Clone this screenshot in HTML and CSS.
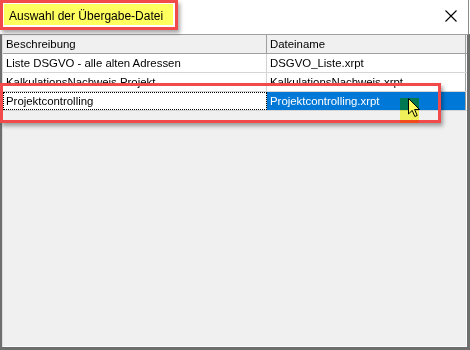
FILE: index.html
```html
<!DOCTYPE html>
<html lang="de">
<head>
    <meta charset="UTF-8">
    <title>Auswahl der Übergabe-Datei</title>
    <link rel="stylesheet" href="styles.css">
</head>
<body>
    <div class="window">
        <div class="titlebar">
            <span class="title">Auswahl der Übergabe-Datei</span>
            <svg class="close" width="12" height="12" viewBox="0 0 12 12"><path d="M0.5 0.5L11.5 11.5M11.5 0.5L0.5 11.5" stroke="#000" stroke-width="1.1"/></svg>
        </div>
        <div class="grid">
            <div class="row head">
                <div class="cell">Beschreibung</div>
                <div class="cell">Dateiname</div>
            </div>
            <div class="row">
                <div class="cell">Liste DSGVO - alle alten Adressen</div>
                <div class="cell">DSGVO_Liste.xrpt</div>
            </div>
            <div class="row">
                <div class="cell">KalkulationsNachweis Projekt</div>
                <div class="cell">KalkulationsNachweis.xrpt</div>
            </div>
            <div class="row current">
                <div class="cell focus">Projektcontrolling</div>
                <div class="cell selected">Projektcontrolling.xrpt</div>
            </div>
        </div>
    </div>

    <!-- annotations drawn over the screenshot -->
    <div class="mark mark-title"></div>
    <div class="mark mark-row"></div>
    <svg class="cursor" width="13" height="20" viewBox="0 0 13 20"><path d="M0.5 0.5L0.5 16L4.2 12.4L6.8 18.5L9.2 17.5L6.6 11.5L11.5 11.5Z" fill="#fff" stroke="#000" stroke-width="1"/></svg>
    <div class="hl hl-title"></div>
    <div class="hl hl-cursor"></div>
</body>
</html>
```
FILE: styles.css
```css
body{
    margin: 0;
    background-color: #fff;
    font-family: 'Liberation Sans', Arial, sans-serif;
    color: #000;
}

.window{
    width: 470px;
    height: 350px;
    display: flex;
    flex-direction: column;
    box-sizing: border-box;
}

.titlebar{
    height: 32px;
    display: flex;
    align-items: center;
    justify-content: space-between;
    padding: 0 11px 2px 9px;
    background-color: #fff;
    border-right: 1px solid #8a8a8a;
    margin-right: 1px;
}

.title{
    font-size: 12px;
}

.grid{
    flex-grow: 1;
    background-color: #f0f0f0;
    border: 3px solid #6e6e6e;
    border-top: 1px solid #a0a0a0;
    border-left-width: 2px;
    box-shadow: inset 1px 0 #dcdcdc, inset -1px -1px #fcfcfc;
    padding-left: 1px;
}

.row{
    display: grid;
    grid-template-columns: 264px 199px;
    height: 18px;
    background-color: #fff;
    border-bottom: 1px solid #d5d5d5;
    font-size: 11.4px;
}

.row.head{
    background-color: #f0f0f0;
    border-bottom: 1px solid #a0a0a0;
}

.cell{
    display: flex;
    align-items: center;
    padding-left: 3px;
    border-right: 1px solid #a0a0a0;
    white-space: nowrap;
    overflow: hidden;
}

.row .cell:first-child{
    border-right-color: #d5d5d5;
}

.row.head .cell:first-child{
    border-right-color: #a0a0a0;
}

.focus{
    outline: 1px dotted #000;
    outline-offset: -1px;
}

.selected{
    background-color: #0078d7;
    color: #fff;
}

.mark{
    position: absolute;
    border: 3px solid #f24a4a;
    box-shadow: 2px 3px 4px rgba(0, 0, 0, 0.35);
    box-sizing: border-box;
}

.mark-title{
    left: 0;
    top: 0;
    width: 178px;
    height: 30px;
}

.mark-row{
    left: 0;
    top: 83px;
    width: 441px;
    height: 40px;
}

.cursor{
    position: absolute;
    left: 408px;
    top: 98px;
}

.hl{
    position: absolute;
    background-color: #ffff60;
    mix-blend-mode: multiply;
}

.hl-title{
    left: 4px;
    top: 4px;
    width: 169px;
    height: 21px;
}

.hl-cursor{
    left: 400px;
    top: 98px;
    width: 19px;
    height: 25px;
}
```
